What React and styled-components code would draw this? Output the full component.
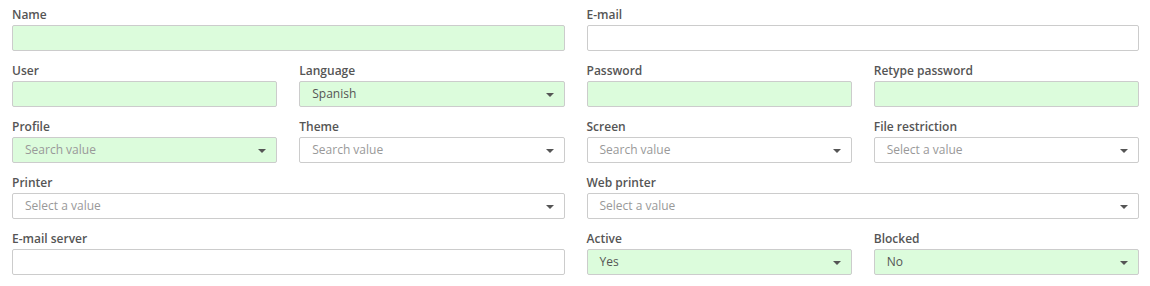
import React from "react";
import styled, { createGlobalStyle } from "styled-components";

const Global = createGlobalStyle`
  html, body { margin: 0; padding: 0; background: #fff; }
  body { font-family: "Open Sans", "Liberation Sans", sans-serif; }
  * { box-sizing: border-box; }
`;

const Form = styled.div`
  display: grid;
  grid-template-columns: repeat(4, 1fr);
  column-gap: 22px;
  row-gap: 11px;
  padding: 6px 11px 0 12px;
  width: 1150px;
`;

const Field = styled.div`
  display: flex;
  flex-direction: column;
  grid-column: span ${(p) => p.$span || 1};
  min-width: 0;
`;

const Label = styled.label`
  font-size: 12px;
  font-weight: 600;
  line-height: 17px;
  color: #555;
  margin-bottom: 2px;
`;

const Input = styled.div`
  height: 26px;
  border: 1px solid #ccc;
  border-radius: 2px;
  background: ${(p) => (p.$required ? "#dcfcdc" : "#fff")};
`;

const Select = styled.div`
  height: 26px;
  border: 1px solid #ccc;
  border-radius: 2px;
  background: ${(p) => (p.$required ? "#dcfcdc" : "#fff")};
  display: flex;
  align-items: center;
  justify-content: space-between;
  padding: 0 10px 0 12px;
  font-size: 12px;
  line-height: 24px;
  color: ${(p) => (p.$placeholder ? "#999" : "#555")};
`;

const Caret = styled.span`
  width: 0;
  height: 0;
  border-left: 4px solid transparent;
  border-right: 4px solid transparent;
  border-top: 4px solid #555;
  margin-top: 1px;
`;

const TextField = ({ label, span, required }) => (
  <Field $span={span}>
    <Label>{label}</Label>
    <Input $required={required} />
  </Field>
);

const SelectField = ({ label, span, required, value, placeholder }) => (
  <Field $span={span}>
    <Label>{label}</Label>
    <Select $required={required} $placeholder={!value}>
      <span>{value || placeholder}</span>
      <Caret />
    </Select>
  </Field>
);

export default function App() {
  return (
    <>
      <Global />
      <Form>
        <TextField label="Name" span={2} required />
        <TextField label="E-mail" span={2} />

        <TextField label="User" required />
        <SelectField label="Language" required value="Spanish" />
        <TextField label="Password" required />
        <TextField label="Retype password" required />

        <SelectField label="Profile" required placeholder="Search value" />
        <SelectField label="Theme" placeholder="Search value" />
        <SelectField label="Screen" placeholder="Search value" />
        <SelectField label="File restriction" placeholder="Select a value" />

        <SelectField label="Printer" span={2} placeholder="Select a value" />
        <SelectField label="Web printer" span={2} placeholder="Select a value" />

        <TextField label="E-mail server" span={2} />
        <SelectField label="Active" required value="Yes" />
        <SelectField label="Blocked" required value="No" />
      </Form>
    </>
  );
}
